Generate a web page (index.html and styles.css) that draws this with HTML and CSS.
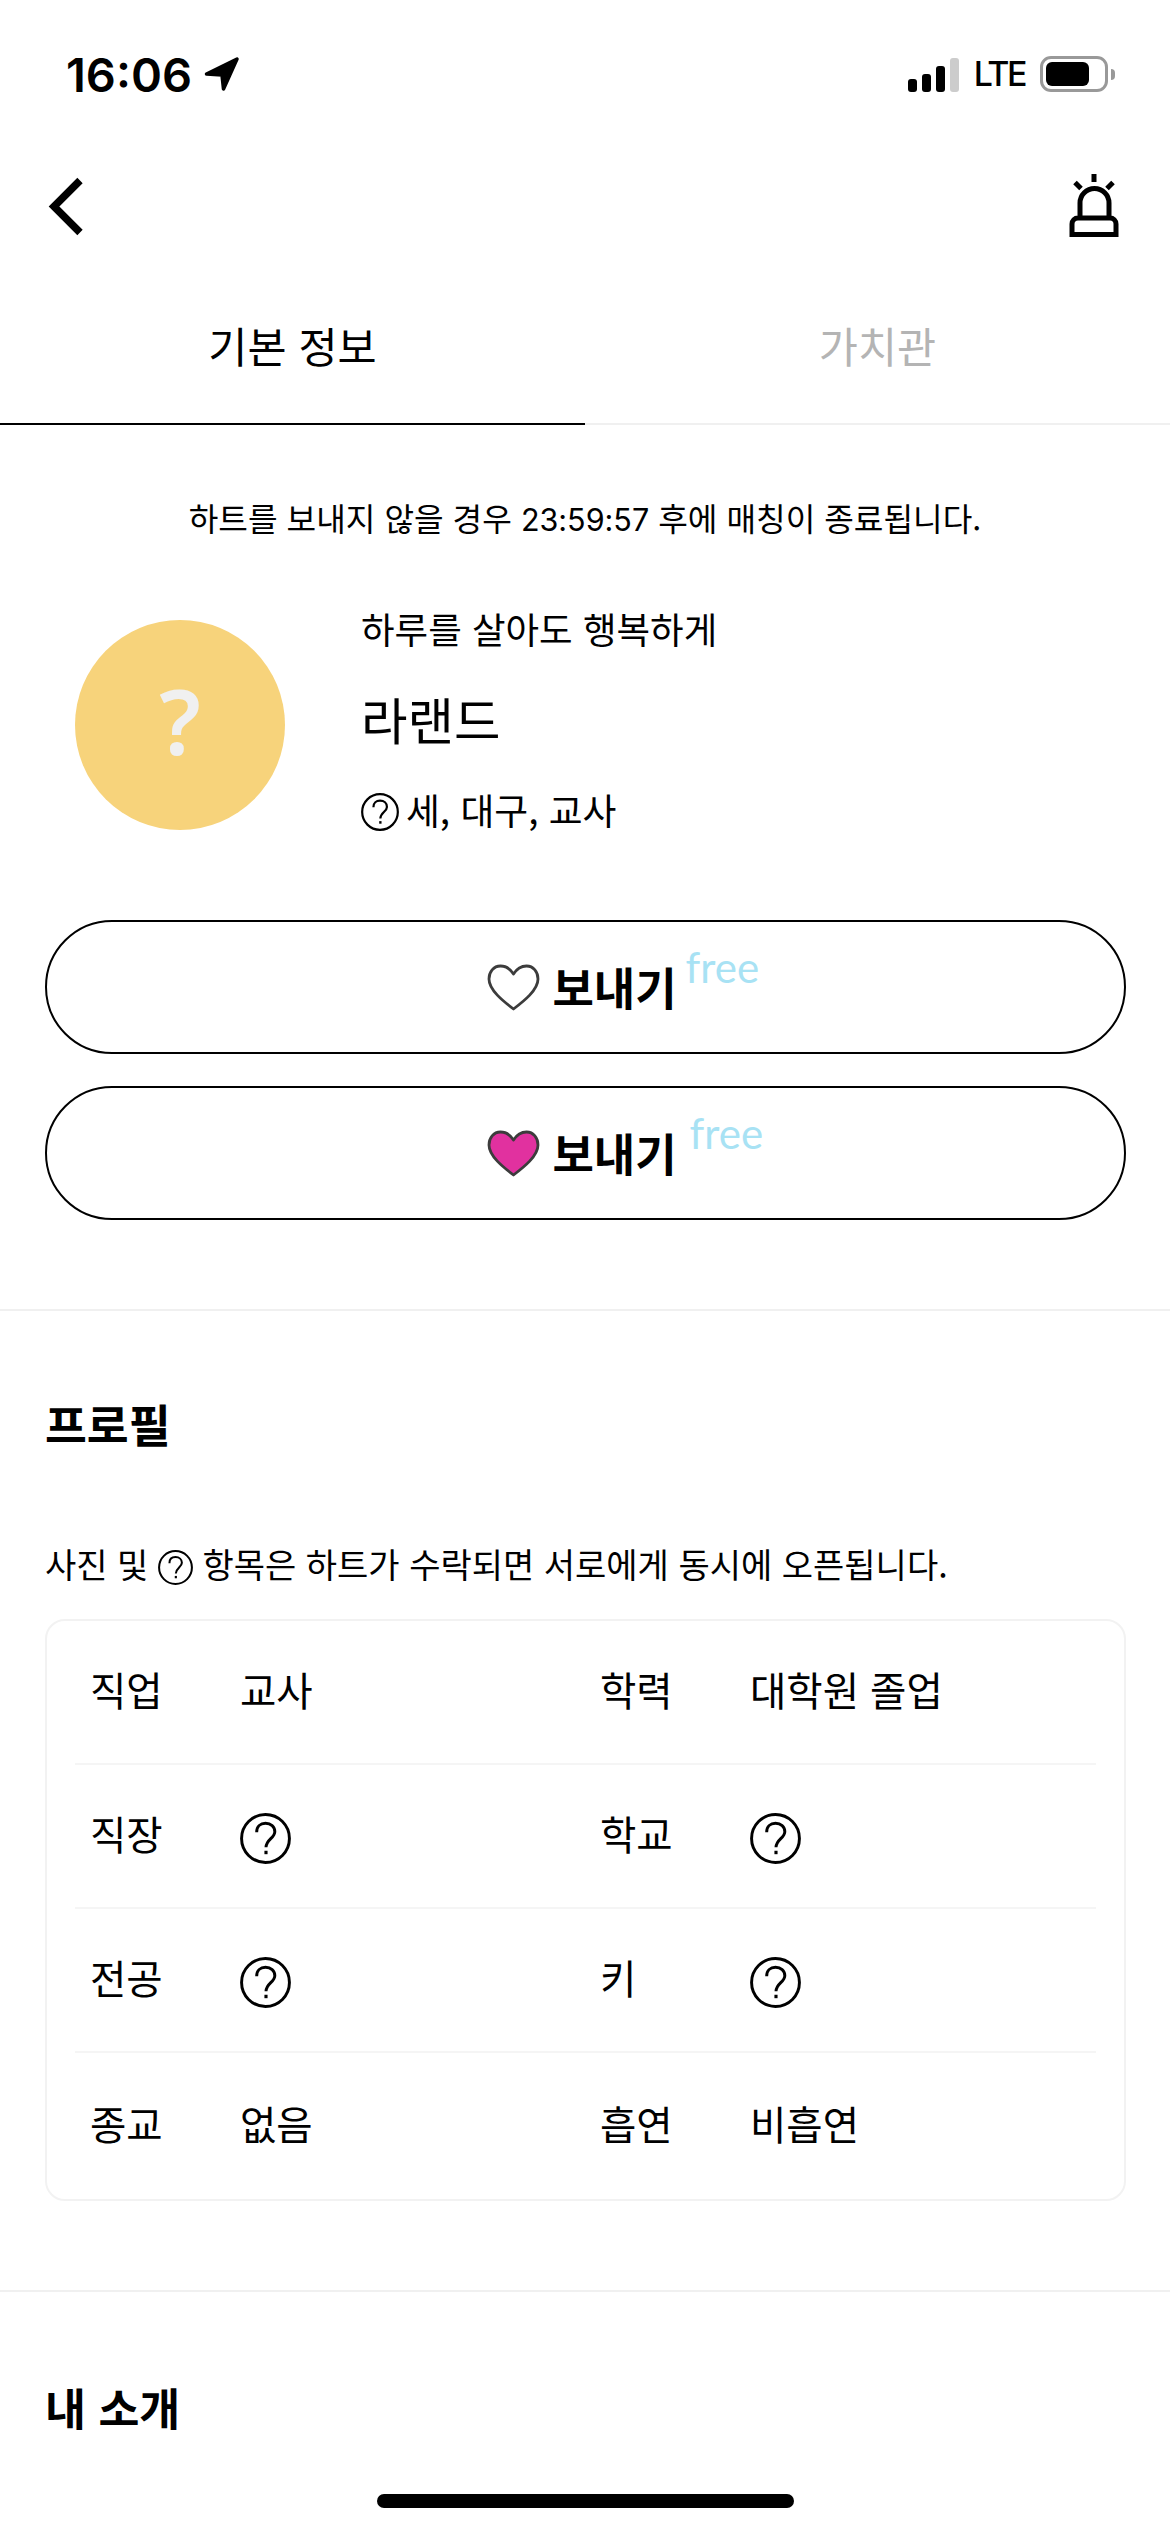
FILE: index.html
```html
<!DOCTYPE html>
<html lang="ko">
<head>
<meta charset="utf-8">
<title>기본 정보</title>
<link rel="stylesheet" href="styles.css">
</head>
<body>
<svg class="defs" width="0" height="0" aria-hidden="true">
  <symbol id="qmark" viewBox="0 0 52 52">
    <circle cx="26" cy="26" r="24.4" fill="none" stroke="currentColor" stroke-width="3"/>
    <path d="M17 19.5C17 13.5 21 10.5 26 10.5C31.5 10.5 35.5 14 35.5 19C35.5 25.5 26.5 27 26.5 35" fill="none" stroke="currentColor" stroke-width="3"/>
    <path d="M26.5 38.5V42" fill="none" stroke="currentColor" stroke-width="3.2"/>
  </symbol>
  <symbol id="heart" viewBox="0 0 53 47">
    <path d="M26.5 10C23 4.500 17.500 2 13.500 2C6.500 2 2 8 2 15C2 26 16 37 26.500 45C37 37 51 26 51 15C51 8 46.500 2 39.500 2C35.500 2 30 4.500 26.500 10Z" stroke="#3c3c3c" stroke-width="2.800" stroke-linejoin="round"/>
  </symbol>
</svg>
<div class="app">
  <header class="status">
    <div class="status-left">
      <span class="time">16:06</span>
      <svg class="loc" viewBox="0 0 36 36"><path d="M2.500 18L33 3L19.500 33L18 19Z" fill="#000" stroke="#000" stroke-width="3.500" stroke-linejoin="round"/></svg>
    </div>
    <div class="status-right">
      <div class="signal">
        <i class="bar b1"></i><i class="bar b2"></i><i class="bar b3"></i><i class="bar b4"></i>
      </div>
      <span class="lte">LTE</span>
      <div class="battery"><div class="battery-fill"></div></div>
      <div class="nub"></div>
    </div>
  </header>

  <nav class="nav">
    <svg class="back" viewBox="0 0 44 68"><path d="M36 8.500L10 34.500L36 60.500" fill="none" stroke="#000" stroke-width="7.500"/></svg>
    <svg class="alarm" viewBox="0 0 56 68">
      <path d="M28 2V10M9 10.500L15 16.500M47 10.500L41 16.500M14 46V31A14.500 14.500 0 0 1 43 31V46M6 62.500V52A6 6 0 0 1 12 46H44A6 6 0 0 1 50 52V62.500Z" fill="none" stroke="#000" stroke-width="5"/>
    </svg>
  </nav>

  <div class="tabs">
    <div class="tab tab-on">기본 정보</div>
    <div class="tab tab-off">가치관</div>
  </div>

  <p class="notice">하트를 보내지 않을 경우 <span class="num">23:59:57</span> 후에 매칭이 종료됩니다.</p>

  <section class="profile">
    <div class="avatar">?</div>
    <div class="who">
      <div class="tagline">하루를 살아도 행복하게</div>
      <div class="name">라랜드</div>
      <div class="meta"><svg class="q q-sm"><use href="#qmark"/></svg><span>세, 대구, 교사</span></div>
    </div>
  </section>

  <section class="actions">
    <button class="send">
      <span class="send-in">
        <svg class="heart heart-empty"><use href="#heart"/></svg>
        <span class="send-label">보내기</span>
        <span class="free">free</span>
      </span>
    </button>
    <button class="send">
      <span class="send-in">
        <svg class="heart heart-full"><use href="#heart"/></svg>
        <span class="send-label">보내기</span>
        <span class="free free-b">free</span>
      </span>
    </button>
  </section>

  <section class="block block-line">
    <h2 class="title">프로필</h2>
    <p class="hint">사진 및 <svg class="q q-hint"><use href="#qmark"/></svg> 항목은 하트가 수락되면 서로에게 동시에 오픈됩니다.</p>
    <div class="card">
      <div class="row">
        <div class="cell"><span class="k">직업</span><span class="v">교사</span></div>
        <div class="cell"><span class="k">학력</span><span class="v">대학원 졸업</span></div>
      </div>
      <div class="row">
        <div class="cell"><span class="k">직장</span><svg class="q q-lg"><use href="#qmark"/></svg></div>
        <div class="cell"><span class="k">학교</span><svg class="q q-lg"><use href="#qmark"/></svg></div>
      </div>
      <div class="row">
        <div class="cell"><span class="k">전공</span><svg class="q q-lg"><use href="#qmark"/></svg></div>
        <div class="cell"><span class="k">키</span><svg class="q q-lg"><use href="#qmark"/></svg></div>
      </div>
      <div class="row">
        <div class="cell"><span class="k">종교</span><span class="v">없음</span></div>
        <div class="cell"><span class="k">흡연</span><span class="v">비흡연</span></div>
      </div>
    </div>
  </section>

  <section class="block">
    <h2 class="title title-b">내 소개</h2>
  </section>

  <div class="home-bar"></div>
</div>
</body>
</html>
```

FILE: styles.css
```css
* { box-sizing: border-box; }
html, body { margin: 0; padding: 0; background: #fff; }
.defs { position: absolute; }
.app {
  position: relative;
  width: 1170px;
  height: 2532px;
  overflow: hidden;
  background: #fff;
  color: #000;
  font-family: "Noto Sans CJK KR", "Noto Sans", sans-serif;
}

/* status bar */
.status {
  height: 148px;
  display: flex;
  justify-content: space-between;
  align-items: center;
  padding: 0 55px 0 66px;
}
.status-left { display: flex; align-items: center; gap: 12px; }
.time {
  font-family: Inter, sans-serif;
  font-weight: 600;
  font-size: 47px;
  line-height: 50px;
  padding-top: 2px;
}
.loc { width: 36px; height: 36px; }
.status-right { display: flex; align-items: center; }
.signal { display: flex; align-items: flex-end; gap: 5px; height: 35px; }
.bar { display: block; width: 9px; background: #000; border-radius: 3px; }
.b1 { height: 13px; }
.b2 { height: 18px; }
.b3 { height: 26px; }
.b4 { height: 34px; background: #ccc; }
.lte {
  font-family: Inter, sans-serif;
  font-weight: 500;
  font-size: 34px;
  line-height: 36px;
  letter-spacing: -2.500px;
  margin: 0 15px;
}
.battery {
  width: 68px;
  height: 36px;
  border: 3px solid #999;
  border-radius: 11px;
  padding: 3px;
}
.battery-fill { width: 43px; height: 24px; background: #000; border-radius: 6px; }
.nub { width: 4px; height: 11px; margin-left: 3px; background: #999; border-radius: 0 4px 4px 0; }

/* nav */
.nav {
  height: 116px;
  display: flex;
  justify-content: space-between;
  align-items: center;
  padding: 0 48px 0 44px;
}
.back { width: 44px; height: 68px; }
.alarm { width: 56px; height: 68px; }

/* tabs */
.tabs { height: 161px; display: flex; }
.tab {
  flex: 1;
  display: flex;
  justify-content: center;
  align-items: center;
  padding-top: 2px;
  font-size: 42.5px;
}
.tab-on { border-bottom: 2px solid #000; color: #000; }
.tab-off { border-bottom: 2px solid #f0f0f0; color: #b4b4b4; }

/* notice */
.notice {
  margin: 68px 0 0;
  height: 48px;
  line-height: 48px;
  text-align: center;
  font-size: 32.2px;
}
.num { font-family: Inter, sans-serif; font-size: 30.5px; }

/* profile head */
.profile {
  margin-top: 72px;
  height: 224px;
  display: flex;
  align-items: center;
  padding-left: 75px;
  gap: 76px;
}
.avatar {
  width: 210px;
  height: 210px;
  border-radius: 50%;
  background: #f7d37b;
  color: #f0f0f0;
  font-family: "Noto Sans", sans-serif;
  font-weight: 600;
  font-size: 90px;
  line-height: 200px;
  display: flex;
  justify-content: center;
  align-items: flex-start;
}
.who {
  align-self: flex-start;
  margin-top: -4px;
  height: 222px;
  display: flex;
  flex-direction: column;
  justify-content: space-between;
}
.tagline { font-size: 36.5px; line-height: 40px; }
.name { font-size: 50.5px; line-height: 60px; }
.meta { display: flex; align-items: center; gap: 7px; font-size: 36.8px; line-height: 40px; }

/* question mark icon */
.q { color: #000; flex: none; }
.q-sm { width: 38px; height: 38px; margin-top: 6px; }
.q-hint { width: 35px; height: 35px; vertical-align: -7px; }
.q-lg { width: 51px; height: 51px; margin-top: 4px; }

/* send buttons */
.actions {
  margin-top: 83px;
  padding: 0 44px 89px 45px;
  display: flex;
  flex-direction: column;
  gap: 32px;
  border-bottom: 2px solid #f0f0f0;
}
.send {
  height: 134px;
  border: 2px solid #000;
  border-radius: 67px;
  background: #fff;
  color: #000;
  font: inherit;
  padding: 0;
  display: flex;
  justify-content: center;
  align-items: center;
}
.send-in { position: relative; display: flex; align-items: center; gap: 12px; padding-right: 7px; }
.heart { width: 53px; height: 47px; }
.heart-empty { fill: #fff; }
.heart-full { fill: #e1319f; }
.send-label { font-size: 45px; font-weight: 700; line-height: 60px; }
.free {
  position: absolute;
  left: 100%;
  top: -14px;
  margin-left: 2px;
  font-family: Lato, sans-serif;
  font-size: 42px;
  line-height: 48px;
  color: #a8e2f4;
}
.free-b { margin-left: 6px; top: -14px; }

/* sections */
.block { padding: 82px 44px 0 45px; }
.block-line { padding-bottom: 89px; border-bottom: 2px solid #f0f0f0; }
.title { margin: 0; font-size: 45.5px; font-weight: 700; line-height: 60px; }
.title-b { margin-top: 3px; font-size: 44.5px; }
.hint { margin: 91px 0 0; font-size: 34px; line-height: 40px; white-space: nowrap; }

.card {
  margin-top: 34px;
  border: 2px solid #f2f2f2;
  border-radius: 20px;
  padding: 0 28px;
}
.row {
  display: grid;
  grid-template-columns: 510px 1fr;
  height: 144px;
  padding-left: 15px;
  border-bottom: 2px solid #f5f5f5;
  align-items: center;
}
.row:last-child { border-bottom: 0; height: 146px; }
.cell { display: flex; align-items: center; font-size: 39.5px; }
.k { width: 150px; line-height: 50px; padding-bottom: 6px; }
.v { line-height: 50px; padding-bottom: 6px; }

.home-bar {
  position: absolute;
  left: 377px;
  top: 2494px;
  width: 417px;
  height: 14px;
  border-radius: 7px;
  background: #000;
}
```
